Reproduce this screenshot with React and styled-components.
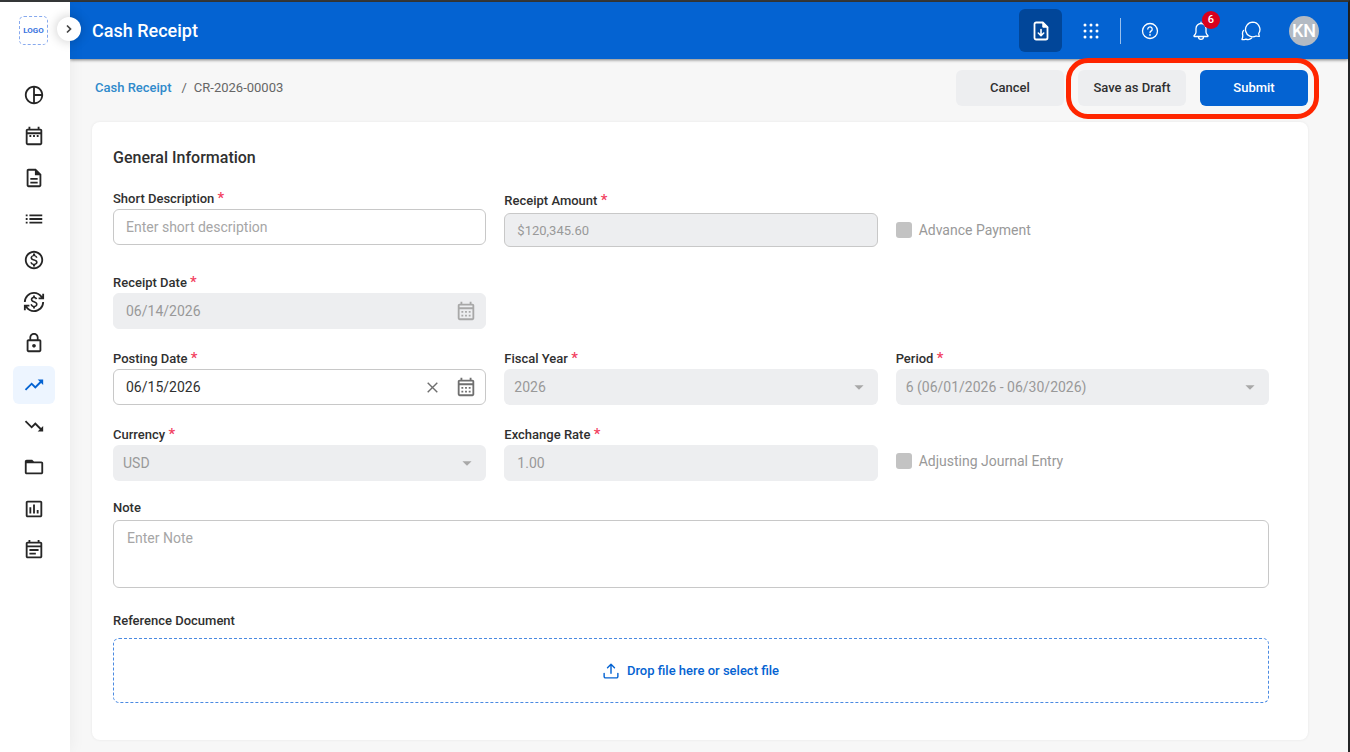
import React, { useState } from 'react';
import styled, { createGlobalStyle } from 'styled-components';
import {
  MdPieChartOutline,
  MdOutlineDateRange,
  MdOutlineDescription,
  MdList,
  MdOutlineMonetizationOn,
  MdCurrencyExchange,
  MdLockOutline,
  MdTrendingUp,
  MdTrendingDown,
  MdFolderOpen,
  MdOutlineAssessment,
  MdOutlineEventNote,
  MdOutlineCalendarMonth,
  MdArrowDropDown,
} from 'react-icons/md';

const GlobalStyle = createGlobalStyle`
  * {
    box-sizing: border-box;
  }

  body {
    margin: 0;
    background: #f7f7f7;
    color: #303030;
    font-family: Roboto, "Liberation Sans", sans-serif;
    font-size: 14px;
  }

  button, input, select, textarea {
    font: inherit;
    color: inherit;
  }

  button {
    padding: 0;
    border: none;
    background: none;
    cursor: pointer;
  }
`;

const Shell = styled.div`
  display: flex;
  min-height: 100vh;
  border-top: 2px solid #363839;
  border-right: 2px solid #242526;
`;

const Sidebar = styled.aside`
  position: relative;
  z-index: 2;
  flex: none;
  display: flex;
  flex-direction: column;
  align-items: center;
  width: 70px;
  padding-top: 14px;
  background: #fff;
  box-shadow: 0 0 16px rgba(0, 0, 0, 0.06);
`;

const Logo = styled.a`
  display: flex;
  align-items: center;
  justify-content: center;
  width: 29px;
  height: 29px;
  margin-right: 3px;
  border: 1px dashed #86a9ee;
  border-radius: 5px;
  color: #3b74e0;
  font-size: 8px;
  font-weight: 700;
  text-decoration: none;
`;

const ToggleButton = styled.button`
  position: absolute;
  top: 15px;
  right: -11px;
  display: flex;
  align-items: center;
  justify-content: center;
  width: 24px;
  height: 24px;
  border-radius: 50%;
  background: #fff;
  box-shadow: 0 0 12px rgba(0, 0, 0, 0.22);
`;

const Nav = styled.nav`
  display: flex;
  flex-direction: column;
  justify-content: space-between;
  height: 493px;
  margin-top: 31px;
  margin-right: 3px;
`;

const NavItem = styled.a`
  display: flex;
  align-items: center;
  justify-content: center;
  width: 42px;
  height: 38px;
  border-radius: 6px;
  font-size: 22px;
  color: ${({ $active }) => ($active ? '#0463d2' : '#262626')};
  background: ${({ $active }) => ($active ? '#edf5ff' : 'transparent')};
`;

const Main = styled.main`
  flex: 1;
  min-width: 0;
`;

const Header = styled.header`
  display: flex;
  align-items: center;
  justify-content: space-between;
  height: 57px;
  padding: 0 29px 0 22px;
  background: #0463d2;
  box-shadow: 0 1px 3px rgba(0, 0, 0, 0.5);
  color: #fff;
`;

const Title = styled.h1`
  margin: 0;
  font-size: 18px;
  font-weight: 500;
`;

const HeaderTools = styled.div`
  display: flex;
  align-items: center;
  gap: 26px;
`;

const ToolGroup = styled.div`
  display: flex;
  align-items: center;
  gap: 17px;
  margin-right: 1px;
`;

const IconButton = styled.button`
  position: relative;
  display: flex;
  align-items: center;
  justify-content: center;
  width: 24px;
  height: 24px;
  color: #fff;
`;

const FileButton = styled(IconButton)`
  width: 43px;
  height: 43px;
  border-radius: 6px;
  background: #014699;
`;

const Divider = styled.span`
  width: 1px;
  height: 26px;
  background: rgba(255, 255, 255, 0.6);
`;

const Badge = styled.span`
  position: absolute;
  top: -8px;
  right: -7px;
  width: 18px;
  border-radius: 9px;
  background: #d9001b;
  font-size: 11px;
  font-weight: 500;
  line-height: 18px;
  text-align: center;
`;

const Avatar = styled.button`
  width: 30px;
  height: 30px;
  border-radius: 50%;
  background: #b3bac3;
  color: #fff;
  font-size: 18px;
  font-weight: 500;
`;

const ActionBar = styled.div`
  display: flex;
  align-items: center;
  justify-content: space-between;
  padding: 11px 40px 16px 25px;
`;

const Breadcrumb = styled.nav`
  display: flex;
  gap: 10px;
  color: #666;
  font-size: 13px;
  line-height: 18px;

  a {
    color: #2f8acb;
    font-weight: 500;
    text-decoration: none;
  }

  span + span {
    margin-left: -3px;
  }
`;

const Actions = styled.div`
  display: flex;
  gap: 14px;
`;

const Highlighted = styled(Actions)`
  position: relative;

  &::after {
    content: '';
    position: absolute;
    inset: -12px -11px -13px -12px;
    border: 5px solid #ff2600;
    border-radius: 22px;
    pointer-events: none;
  }
`;

const Button = styled.button`
  width: 108px;
  height: 36px;
  border-radius: 6px;
  background: ${({ $primary }) => ($primary ? '#0463d2' : '#edeef0')};
  color: ${({ $primary }) => ($primary ? '#fff' : '#303030')};
  font-size: 13px;
  font-weight: 500;
  line-height: 18px;
`;

const Card = styled.form`
  margin: 0 40px 12px 22px;
  padding: 24px 39px 37px 21px;
  border-radius: 8px;
  background: #fff;
  box-shadow: 0 0 3px rgba(0, 0, 0, 0.07);
`;

const SectionTitle = styled.h2`
  margin: 0 0 19px;
  font-size: 16px;
  font-weight: 500;
  line-height: 24px;
`;

const Grid = styled.div`
  display: grid;
  grid-template-columns: repeat(3, minmax(0, 1fr));
  gap: 20px 18px;
  margin-bottom: 17px;
`;

const Field = styled.div`
  grid-column-start: ${({ $first }) => ($first ? 1 : 'auto')};
  padding-top: ${({ $inset }) => ($inset ? 2 : 0)}px;
  padding-bottom: ${({ $hint }) => ($hint ? 8 : 0)}px;
`;

const Label = styled.label`
  display: block;
  height: 20px;
  font-size: 13px;
  font-weight: 500;
  line-height: 20px;
`;

const Required = styled.span`
  color: #f2415f;
  font-size: 15px;
  line-height: 1;
`;

const Control = styled.div`
  display: flex;
  align-items: center;
  height: ${({ $compact }) => ($compact ? 34 : 36)}px;
  margin-top: ${({ $compact }) => ($compact ? 2 : 0)}px;
  padding: 0 12px;
  border: 1px solid ${({ $disabled, $compact }) => ($disabled && !$compact ? '#edeef0' : '#c8c8c8')};
  border-radius: 6px;
  background: ${({ $disabled }) => ($disabled ? '#edeef0' : '#fff')};
`;

const Input = styled.input`
  flex: 1;
  min-width: 0;
  padding: 0;
  border: none;
  outline: none;
  background: none;
  font-size: ${({ $small }) => ($small ? 13 : 14)}px;

  &:disabled {
    color: #999;
  }

  &::placeholder {
    color: #a6a6a6;
  }
`;

const AddonButton = styled.button`
  display: flex;
  align-items: center;
  justify-content: center;
  width: 22px;
  height: 22px;
  margin-left: 12px;
  margin-right: -4px;
  color: #6f6f6f;
  font-size: 22px;

  & + & {
    margin-left: 16px;
  }

  &:disabled {
    color: #a8a8a8;
  }
`;

const SelectBox = styled.div`
  display: grid;
  align-items: center;
  height: 36px;
  border-radius: 6px;
  background: #edeef0;

  select, svg {
    grid-area: 1 / 1;
  }

  select {
    width: 100%;
    height: 100%;
    padding: 0 40px 0 10px;
    border: none;
    background: none;
    appearance: none;
    opacity: 1;
    color: #999;
  }

  svg {
    justify-self: end;
    margin-right: 8px;
    color: #a8a8a8;
    font-size: 22px;
    pointer-events: none;
  }
`;

const CheckLabel = styled.label`
  display: flex;
  align-items: center;
  align-self: start;
  gap: 7px;
  height: 24px;
  margin-top: ${({ $top }) => $top}px;
  color: #999;

  input {
    width: 16px;
    height: 16px;
    margin: 0;
    border-radius: 3px;
    background: #c3c3c3;
    appearance: none;
  }
`;

const TextArea = styled.textarea`
  display: block;
  width: 100%;
  height: 68px;
  margin: 2px 0 23px;
  padding: 9px 13px;
  border: 1px solid #c8c8c8;
  border-radius: 6px;
  outline: none;
  resize: none;

  &::placeholder {
    color: #a6a6a6;
  }
`;

const DropZone = styled.button`
  display: flex;
  align-items: center;
  justify-content: center;
  gap: 8px;
  width: 100%;
  height: 65px;
  margin-top: 7px;
  border: 1px dashed #4a8ae2;
  border-radius: 6px;
  color: #0463d2;
  font-size: 13px;
  font-weight: 500;
`;

const navItems = [
  { name: 'Dashboard', icon: MdPieChartOutline },
  { name: 'Calendar', icon: MdOutlineDateRange },
  { name: 'Documents', icon: MdOutlineDescription },
  { name: 'Lists', icon: MdList },
  { name: 'Payments', icon: MdOutlineMonetizationOn },
  { name: 'Exchange', icon: MdCurrencyExchange },
  { name: 'Closing', icon: MdLockOutline },
  { name: 'Receivables', icon: MdTrendingUp, active: true },
  { name: 'Payables', icon: MdTrendingDown },
  { name: 'Files', icon: MdFolderOpen },
  { name: 'Reports', icon: MdOutlineAssessment },
  { name: 'Notes', icon: MdOutlineEventNote },
];

const strokeProps = {
  fill: 'none',
  stroke: 'currentColor',
  strokeLinecap: 'round',
  strokeLinejoin: 'round',
};

const ChevronIcon = () => (
  <svg width="8" height="10" viewBox="0 0 8 10" fill="none" stroke="#444" strokeWidth="1.7">
    <path d="M2 1.5 5.5 5 2 8.5" />
  </svg>
);

const FileDownIcon = () => (
  <svg width="16" height="20" viewBox="0 0 16 20" {...strokeProps} strokeWidth="1.8">
    <path d="M9.8 1.5H3.2A1.7 1.7 0 0 0 1.5 3.2v13.6a1.7 1.7 0 0 0 1.7 1.7h9.6a1.7 1.7 0 0 0 1.7-1.7V6.2z" />
    <path d="M9.8 1.5v4.7h4.7z" fill="currentColor" strokeWidth="1" />
    <path d="M8 8.5v6M5.3 12 8 14.7l2.7-2.7" strokeWidth="1.6" />
  </svg>
);

const AppsIcon = () => (
  <svg width="16" height="16" viewBox="0 0 16 16" fill="currentColor">
    {[2, 8, 14].map((y) => [2, 8, 14].map((x) => <circle key={`${x}-${y}`} cx={x} cy={y} r="1.5" />))}
  </svg>
);

const HelpIcon = () => (
  <svg width="18" height="18" viewBox="0 0 18 18" {...strokeProps} strokeWidth="1.3">
    <circle cx="9" cy="9" r="7.5" />
    <path d="M6.8 7.1a2.2 2.2 0 1 1 3.5 1.8C9.4 9.5 9 9.8 9 10.7" />
    <circle cx="9" cy="12.9" r="0.9" fill="currentColor" stroke="none" />
  </svg>
);

const BellIcon = () => (
  <svg width="18" height="20" viewBox="0 0 18 20" {...strokeProps} strokeWidth="1.3">
    <path d="M9 1.2v1.3M9 2.5a5 5 0 0 0-5 5v3.8c0 1.2-.8 2.2-1.8 3.1-.4.4-.3 1.1.3 1.1h13c.6 0 .7-.7.3-1.1-1-.9-1.8-1.9-1.8-3.1V7.5a5 5 0 0 0-5-5z" />
    <path d="M6.5 15.7a2.5 2.6 0 0 0 5 0" />
  </svg>
);

const ChatIcon = () => (
  <svg width="20" height="20" viewBox="0 0 20 20" {...strokeProps} strokeWidth="1.3">
    <path d="M11.7 1.2a7.3 7.3 0 1 0 3.4 13.8c.9.3 2 .5 2.9.4.4 0 .5-.3.3-.6-.4-.7-.6-1.6-.6-2.3A7.3 7.3 0 0 0 11.7 1.2z" />
    <path d="M2.6 9.4c-1 1.2-1.4 3-.8 4.9 0 1.2-.2 2.7-.8 3.9-.1.3.1.5.4.5 1.2 0 2.5-.2 3.5-.6 2 .8 4.2.4 5.7-1.1" />
  </svg>
);

const ClearIcon = () => (
  <svg width="11" height="11" viewBox="0 0 11 11" fill="none" stroke="currentColor" strokeWidth="1.4">
    <path d="M.7.7l9.6 9.6M10.3.7.7 10.3" />
  </svg>
);

const UploadIcon = () => (
  <svg width="16" height="16" viewBox="0 0 17 17" {...strokeProps} strokeWidth="1.5">
    <path d="M8.5 11V1.5M4.8 5l3.7-3.7L12.2 5" />
    <path d="M1.2 11v3.3a1.5 1.5 0 0 0 1.5 1.5h11.6a1.5 1.5 0 0 0 1.5-1.5V11" />
  </svg>
);

const FieldLabel = ({ id, text }) => (
  <Label htmlFor={id}>
    {text} <Required>*</Required>
  </Label>
);

const SelectField = ({ id, label, value }) => (
  <Field>
    <FieldLabel id={id} text={label} />
    <SelectBox>
      <select id={id} defaultValue={value} disabled>
        <option>{value}</option>
      </select>
      <MdArrowDropDown />
    </SelectBox>
  </Field>
);

const App = () => {
  const [description, setDescription] = useState('');
  const [postingDate, setPostingDate] = useState('06/15/2026');
  const [note, setNote] = useState('');

  return (
    <>
      <GlobalStyle />
      <Shell>
        <Sidebar>
          <Logo href="#">LOGO</Logo>
          <ToggleButton type="button" aria-label="Expand menu">
            <ChevronIcon />
          </ToggleButton>
          <Nav>
            {navItems.map(({ name, icon: Icon, active }) => (
              <NavItem key={name} href="#" aria-label={name} $active={active}>
                <Icon />
              </NavItem>
            ))}
          </Nav>
        </Sidebar>

        <Main>
          <Header>
            <Title>Cash Receipt</Title>
            <HeaderTools>
              <ToolGroup>
                <FileButton type="button" aria-label="Downloads"><FileDownIcon /></FileButton>
                <IconButton type="button" aria-label="Apps"><AppsIcon /></IconButton>
                <Divider />
                <IconButton type="button" aria-label="Help"><HelpIcon /></IconButton>
              </ToolGroup>
              <IconButton type="button" aria-label="Notifications">
                <BellIcon />
                <Badge>6</Badge>
              </IconButton>
              <IconButton type="button" aria-label="Messages"><ChatIcon /></IconButton>
              <Avatar type="button">KN</Avatar>
            </HeaderTools>
          </Header>

          <ActionBar>
            <Breadcrumb>
              <a href="#">Cash Receipt</a>
              <span>/</span>
              <span>CR-2026-00003</span>
            </Breadcrumb>
            <Actions>
              <Button type="button">Cancel</Button>
              <Highlighted>
                <Button type="button">Save as Draft</Button>
                <Button type="submit" form="receipt" $primary>Submit</Button>
              </Highlighted>
            </Actions>
          </ActionBar>

          <Card id="receipt" onSubmit={(e) => e.preventDefault()}>
            <SectionTitle>General Information</SectionTitle>
            <Grid>
              <Field $hint>
                <FieldLabel id="description" text="Short Description" />
                <Control>
                  <Input
                    id="description"
                    type="text"
                    value={description}
                    onChange={(e) => setDescription(e.target.value)}
                    placeholder="Enter short description"
                  />
                </Control>
              </Field>
              <Field $inset>
                <FieldLabel id="amount" text="Receipt Amount" />
                <Control $disabled $compact>
                  <Input id="amount" type="text" defaultValue="$120,345.60" disabled $small />
                </Control>
              </Field>
              <CheckLabel $top={29}>
                <input type="checkbox" disabled />
                Advance Payment
              </CheckLabel>

              <Field $first>
                <FieldLabel id="receipt-date" text="Receipt Date" />
                <Control $disabled>
                  <Input id="receipt-date" type="text" defaultValue="06/14/2026" disabled />
                  <AddonButton type="button" aria-label="Choose receipt date" disabled>
                    <MdOutlineCalendarMonth />
                  </AddonButton>
                </Control>
              </Field>

              <Field $first>
                <FieldLabel id="posting-date" text="Posting Date" />
                <Control>
                  <Input
                    id="posting-date"
                    type="text"
                    value={postingDate}
                    onChange={(e) => setPostingDate(e.target.value)}
                  />
                  <AddonButton type="button" aria-label="Clear date" onClick={() => setPostingDate('')}>
                    <ClearIcon />
                  </AddonButton>
                  <AddonButton type="button" aria-label="Choose posting date">
                    <MdOutlineCalendarMonth />
                  </AddonButton>
                </Control>
              </Field>
              <SelectField id="year" label="Fiscal Year" value="2026" />
              <SelectField id="period" label="Period" value="6 (06/01/2026 - 06/30/2026)" />

              <SelectField id="currency" label="Currency" value="USD" />
              <Field>
                <FieldLabel id="rate" text="Exchange Rate" />
                <Control $disabled>
                  <Input id="rate" type="text" defaultValue="1.00" disabled />
                </Control>
              </Field>
              <CheckLabel $top={24}>
                <input type="checkbox" disabled />
                Adjusting Journal Entry
              </CheckLabel>
            </Grid>

            <Label htmlFor="note">Note</Label>
            <TextArea
              id="note"
              value={note}
              onChange={(e) => setNote(e.target.value)}
              placeholder="Enter Note"
            />

            <Label htmlFor="document">Reference Document</Label>
            <DropZone id="document" type="button">
              <UploadIcon />
              Drop file here or select file
            </DropZone>
          </Card>
        </Main>
      </Shell>
    </>
  );
};

export default App;
